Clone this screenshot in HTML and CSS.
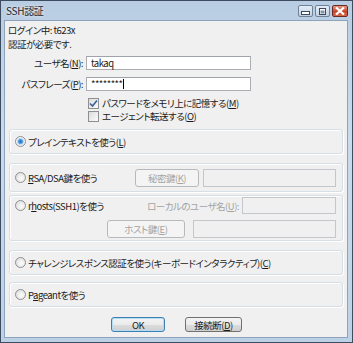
FILE: index.html
```html
<!DOCTYPE html>
<html lang="ja">
<head>
  <meta charset="UTF-8" />
  <title>SSH認証</title>
  <link rel="stylesheet" href="styles.css">
</head>
<body>
  <div class="window">
    <div class="titlebar">
      <span class="title">SSH認証</span>
      <div class="caption-btns">
        <span class="cap-btn"><svg width="9" height="7" viewBox="0 0 9 7"><rect x="0.5" y="3.5" width="8" height="3" fill="#fff" stroke="#3b4a5e"/></svg></span>
        <span class="cap-btn"><svg width="9" height="7" viewBox="0 0 9 7"><rect x="1.5" y="0.5" width="6" height="6" fill="#fff" stroke="#3b4a5e"/><rect x="2.5" y="2.5" width="4" height="3" fill="#7f93aa"/></svg></span>
        <span class="cap-btn close"><svg width="10" height="8" viewBox="0 0 10 8"><path d="M1 0.5 L9 7.5 M9 0.5 L1 7.5" stroke="#fff" stroke-width="2.2"/></svg></span>
      </div>
    </div>
    <div class="client">
      <div class="line">ログイン中: t623x</div>
      <div class="line">認証が必要です.</div>

      <div class="form-row first">
        <span class="lbl">ユーザ名(<u>N</u>):</span>
        <div class="field wide">takaq</div>
      </div>
      <div class="form-row">
        <span class="lbl">パスフレーズ(<u>P</u>):</span>
        <div class="field wide">********<span class="caret"></span></div>
      </div>
      <div class="check-row first">
        <span class="checkbox"><svg width="9" height="9" viewBox="0 0 9 9"><path d="M1 4.5 L3.5 7 L8 1.5" fill="none" stroke="#3a5f9a" stroke-width="1.6"/></svg></span>
        <span class="txt">パスワードをメモリ上に記憶する(<u>M</u>)</span>
      </div>
      <div class="check-row">
        <span class="checkbox"></span>
        <span class="txt">エージェント転送する(<u>O</u>)</span>
      </div>

      <div class="group g1">
        <div class="opt"><span class="radio on"></span><span class="txt">プレインテキストを使う(<u>L</u>)</span></div>
      </div>

      <div class="group g2">
        <div class="opt grow"><span class="radio"></span><span class="txt"><u>R</u>SA/DSA鍵を使う</span></div>
        <div class="btn disabled key-btn"><span class="txt">秘密鍵(<u>K</u>)</span></div>
        <div class="field disabled key-field"></div>
      </div>

      <div class="group g3">
        <div class="g3-top">
          <div class="opt grow"><span class="radio"></span><span class="txt">r<u>h</u>osts(SSH1)を使う</span></div>
          <span class="dim-lbl">ローカルのユーザ名(<u>U</u>):</span>
          <div class="field disabled local-field"></div>
        </div>
        <div class="g3-bottom">
          <div class="btn disabled host-btn"><span class="txt">ホスト鍵(<u>E</u>)</span></div>
          <div class="field disabled host-field"></div>
        </div>
      </div>

      <div class="group g4">
        <div class="opt"><span class="radio"></span><span class="txt">チャレンジレスポンス認証を使う(キーボードインタラクティブ)(<u>C</u>)</span></div>
      </div>

      <div class="group g5">
        <div class="opt"><span class="radio"></span><span class="txt">P<u>a</u>geantを使う</span></div>
      </div>

      <div class="buttons">
        <div class="btn default ok-btn"><span class="txt">OK</span></div>
        <div class="btn close-btn"><span class="txt">接続断(<u>D</u>)</span></div>
      </div>
    </div>
  </div>
</body>
</html>
```
FILE: styles.css
```css
* {
  box-sizing: border-box;
}

html, body {
  margin: 0;
  padding: 0;
}

body {
  width: 353px;
  height: 343px;
  overflow: hidden;
  font-family: "Noto Sans CJK JP", "Noto Sans", sans-serif;
  font-size: 9.5px;
  line-height: 14px;
  font-feature-settings: "palt";
  letter-spacing: -0.5px;
  white-space: nowrap;
  color: #1a1a1a;
}

u {
  text-decoration: underline;
  text-underline-offset: 1px;
}

.window {
  width: 353px;
  height: 343px;
  border: 1px solid #3d4d5f;
  background: linear-gradient(to bottom, #b9cde2, #c9dbee 40%, #bdd1e6);
  padding: 0 4px 4px 3px;
  display: flex;
  flex-direction: column;
}

.titlebar {
  height: 19px;
  display: flex;
  align-items: center;
  justify-content: space-between;
  padding-left: 2px;
}

.title {
  font-size: 10px;
  letter-spacing: -0.3px;
  color: #1c2430;
  text-shadow: 0 0 3px #fff;
}

.caption-btns {
  display: flex;
  gap: 2px;
  margin-top: 1px;
}

.cap-btn {
  width: 15px;
  height: 12px;
  border: 1px solid #6f829a;
  border-radius: 2px;
  background: linear-gradient(to bottom, #e4edf6, #c0d0e2);
  display: flex;
  align-items: center;
  justify-content: center;
}

.cap-btn.close {
  width: 16px;
  border-color: #6b2b22;
  background: linear-gradient(to bottom, #e59a85, #c8452b 55%, #d86a4b);
}

.client {
  flex: 1;
  background: #f0f0f0;
  border: 1px solid #8ea3bb;
  padding: 2px 4px 0 3px;
}

.line {
  height: 14px;
}

.form-row {
  display: flex;
  align-items: center;
  height: 14px;
  margin-top: 7px;
}

.form-row.first {
  margin-top: 5px;
}

.lbl {
  width: 78px;
  text-align: right;
  padding-right: 3px;
}

.field {
  height: 15px;
  border: 1px solid #abadb3;
  border-top-color: #9fa3ab;
  background: #fff;
  line-height: 12px;
  padding-left: 4px;
}

.field.wide {
  width: 165px;
  height: 14px;
}

.caret {
  display: inline-block;
  width: 1px;
  height: 10px;
  background: #000;
  vertical-align: -1px;
}

.field.disabled {
  background: #f0f0f0;
  border-color: #c3c6cb;
}

.check-row {
  display: flex;
  align-items: center;
  gap: 3px;
  margin-left: 80px;
  height: 13px;
  line-height: 13px;
}

.check-row.first {
  margin-top: 6px;
}

.checkbox {
  width: 11px;
  height: 11px;
  border: 1px solid #8e8f8f;
  background: linear-gradient(135deg, #dcdcdc, #fbfbfb);
  display: flex;
  align-items: center;
  justify-content: center;
}

.group {
  margin-left: 1px;
  border: 1px solid #d5dfe5;
  border-radius: 3px;
  box-shadow: inset 1px 1px 0 #fff, 1px 1px 0 #fff;
  padding: 0 6px 0 5px;
}

.g1 {
  margin-top: 6px;
  height: 25px;
  display: flex;
  align-items: center;
}

.g2 {
  margin-top: 9px;
  height: 29px;
  display: flex;
  align-items: center;
}

.g3 {
  margin-top: 3px;
  height: 46px;
  padding-top: 1px;
}

.g4 {
  margin-top: 9px;
  height: 25px;
  display: flex;
  align-items: center;
}

.g5 {
  margin-top: 7px;
  height: 25px;
  display: flex;
  align-items: center;
}

.opt {
  display: flex;
  align-items: center;
  gap: 2px;
}

.grow {
  flex: 1;
}

.radio {
  width: 11px;
  height: 11px;
  border-radius: 50%;
  border: 1px solid #8e8f8f;
  background: radial-gradient(circle at 60% 60%, #fdfdfd, #d7d7d7);
}

.radio.on {
  background: radial-gradient(circle, #2f6ab6 0, #4c9be0 2px, #b8d7f3 3px, #f4f4f4 4px);
}

.btn {
  height: 15px;
  border: 1px solid #707070;
  border-radius: 3px;
  background: linear-gradient(to bottom, #f3f3f3, #ebebeb 50%, #dddddd 51%, #cfcfcf);
  display: flex;
  align-items: center;
  justify-content: center;
}

.btn.disabled {
  color: #a3a3a3;
  border-color: #b6babd;
  background: #f4f4f4;
}

.key-btn {
  width: 64px;
  height: 18px;
  margin-right: 4px;
}

.key-field {
  width: 133px;
  height: 18px;
}

.g3-top {
  display: flex;
  align-items: center;
  height: 17px;
}

.dim-lbl {
  color: #a3a3a3;
  margin-right: 3px;
}

.local-field {
  width: 94px;
  height: 17px;
}

.g3-bottom {
  display: flex;
  align-items: center;
  margin-top: 6px;
  margin-left: 92px;
}

.host-btn {
  width: 78px;
  height: 18px;
  margin-right: 8px;
}

.host-field {
  width: 144px;
  height: 18px;
}

.buttons {
  display: flex;
  justify-content: center;
  gap: 20px;
  margin-top: 10px;
  padding-left: 2px;
}

.ok-btn {
  width: 54px;
}

.close-btn {
  width: 57px;
}

.btn.default {
  border-color: #3c7fb1;
  box-shadow: inset 0 0 0 1px #b5dcf4;
}
```
